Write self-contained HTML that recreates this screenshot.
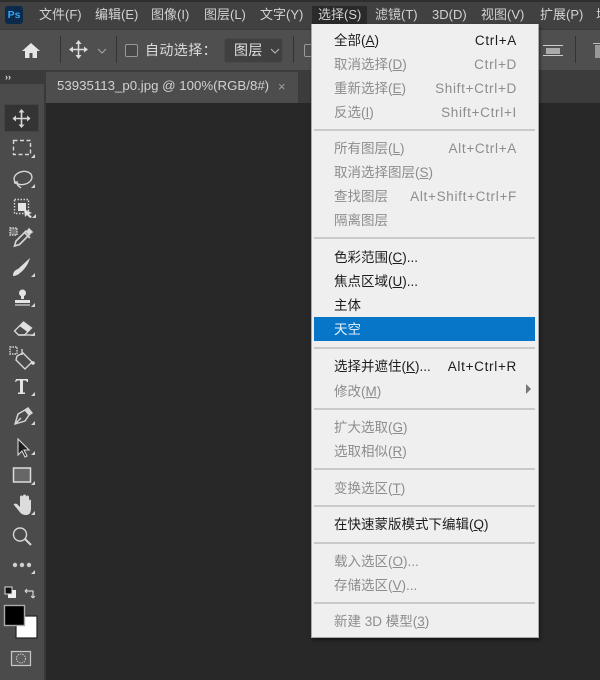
<!DOCTYPE html>
<html lang="zh"><head><meta charset="utf-8"><title>Photoshop 选择菜单</title>
<style>
html,body{margin:0;padding:0;background:#282828}
#r{position:relative;width:600px;height:680px;overflow:hidden;background:#282828;font-family:"Liberation Sans","Noto Sans CJK SC",sans-serif;font-size:13.5px;filter:blur(.35px)}
#r div,#r span.a,#r svg{position:absolute}
.m{top:6px;height:18px;line-height:18px;color:#d2d2d2;white-space:nowrap;font-size:13px}
.i{left:334px;height:24px;line-height:24px;white-space:nowrap;color:#8d8d8d;margin-top:1px}
.k{right:83px;height:24px;line-height:24px;white-space:nowrap;color:#8d8d8d;letter-spacing:.7px;margin-top:1px}
.b{color:#1c1c1c}
.s{left:314px;width:221px;height:2px;background:#c9c9c9}
u{text-underline-offset:1px}
</style></head><body><div id="r">
<div style="left:0;top:0;width:600px;height:29px;background:#414141"></div>
<div style="left:0;top:0;width:600px;height:2px;background:#2e2e2e"></div>
<div style="left:0;top:29px;width:600px;height:41px;background:#4f4f4f;border-top:1px solid #3a3a3a;box-sizing:border-box"></div>
<div style="left:0;top:70px;width:600px;height:33px;background:#3c3c3c"></div>
<div style="left:0;top:70px;width:44px;height:14px;background:#3a3a3a"></div>
<div style="left:46px;top:72px;width:252px;height:31px;background:#4d4d4d"></div>
<div style="left:0;top:84px;width:44px;height:596px;background:#4b4b4b"></div>
<div style="left:44px;top:84px;width:2px;height:596px;background:#383838"></div>
<div style="left:46px;top:103px;width:554px;height:577px;background:#282828"></div>

<div style="left:5px;top:6px;width:18px;height:18px;border-radius:3px;background:#0b2a4c"></div>
<div style="left:5px;top:6px;width:18px;height:18px;line-height:18px;text-align:center;color:#35a5f0;font-size:10.5px;font-weight:bold">Ps</div>

<div class="m" style="left:39px">文件(F)</div>
<div class="m" style="left:95px">编辑(E)</div>
<div class="m" style="left:151px">图像(I)</div>
<div class="m" style="left:204px">图层(L)</div>
<div class="m" style="left:260px">文字(Y)</div>
<div style="left:312px;top:6px;width:55px;height:18px;background:#2a2a2a"></div>
<div class="m" style="left:318px">选择(S)</div>
<div class="m" style="left:375px">滤镜(T)</div>
<div class="m" style="left:432px">3D(D)</div>
<div class="m" style="left:481px">视图(V)</div>
<div class="m" style="left:540px">扩展(P)</div>
<div class="m" style="left:596px">增</div>

<svg style="left:20px;top:40px" width="22" height="20" viewBox="0 0 22 20"><path d="M11 3 2 11h3v7h4.500v-5h3v5H17v-7h3z" fill="#e6e6e6"/></svg>
<div style="left:60px;top:36px;width:1px;height:27px;background:#333"></div>
<svg style="left:69px;top:40px" width="19" height="19" viewBox="0 0 19 19"><path d="M9.500 1v17M1 9.500h17" stroke="#ddd" stroke-width="1.500"/><path d="M9.500 0 6.500 4h6zM9.500 19l-3-4h6zM0 9.500l4-3v6zM19 9.500l-4-3v6z" fill="#ddd"/></svg>
<svg style="left:97px;top:47px" width="10" height="8" viewBox="0 0 10 8"><path d="M1 2l4 4 4-4" fill="none" stroke="#aaa"/></svg>
<div style="left:116px;top:36px;width:1px;height:27px;background:#333"></div>
<div style="left:125px;top:44px;width:11px;height:11px;border:1px solid #999;border-radius:2px;background:#474747"></div>
<div class="m" style="left:145px;top:41px;color:#dcdcdc;font-size:14px;letter-spacing:.4px">自动选择：</div>
<div style="left:224px;top:38px;width:59px;height:25px;background:#404040;border:1px solid #4a4a4a;border-radius:3px;box-sizing:border-box"></div>
<div class="m" style="left:234px;top:41px;color:#e0e0e0;font-size:14px;letter-spacing:.4px">图层</div>
<svg style="left:270px;top:47px" width="10" height="8" viewBox="0 0 10 8"><path d="M1 2l4 4 4-4" fill="none" stroke="#bbb"/></svg>
<div style="left:293px;top:36px;width:1px;height:27px;background:#333"></div>
<div style="left:304px;top:44px;width:11px;height:11px;border:1px solid #999;border-radius:2px"></div>
<div style="left:543px;top:45px;width:20px;height:1px;background:#ccc"></div>
<div style="left:546px;top:48px;width:14px;height:6px;background:#aaa"></div>
<div style="left:543px;top:55px;width:20px;height:1px;background:#ccc"></div>
<div style="left:575px;top:36px;width:1px;height:27px;background:#333"></div>
<div style="left:593px;top:43px;width:7px;height:1px;background:#bbb"></div>
<div style="left:595px;top:45px;width:5px;height:13px;background:#999"></div>

<div style="left:5px;top:72px;color:#ddd;font-size:9px;line-height:10px;font-weight:bold">››</div>
<div style="left:57px;top:76px;height:20px;line-height:20px;color:#d2d2d2;font-size:13.25px;white-space:nowrap">53935113_p0.jpg @ 100%(RGB/8#)</div>
<div style="left:278px;top:77px;height:20px;line-height:20px;color:#a0a0a0;font-size:13px">×</div>

<div style="left:4px;top:104px;width:35px;height:28px;background:#343434;border:1px solid #444;box-sizing:border-box"></div>
<svg style="left:0;top:100px" width="44" height="580" viewBox="0 100 44 580" fill="none" stroke="#d6d6d6" stroke-width="1.400">
<g fill="#d6d6d6" stroke="none"><path d="M35 158v-4l-4 4zM35 188v-4l-4 4zM36 218v-4l-4 4zM35 277v-4l-4 4zM35 307v-4l-4 4zM35 336v-4l-4 4zM35 396v-4l-4 4zM35 425v-4l-4 4zM35 455v-4l-4 4zM35 485v-4l-4 4zM35 515v-4l-4 4zM35 574v-4l-4 4z"/></g>
<path d="M21.500 110v17M13 118.500h17" stroke-width="1.600"/><path d="M21.500 109l-3 3.500h6zM21.500 128l-3-3.500h6zM12.500 118.500l3.500-3v6zM30.500 118.500l-3.500-3v6z" fill="#d6d6d6" stroke="none"/>
<rect x="13.500" y="140.500" width="17" height="14" stroke-dasharray="4 2.500"/>
<ellipse cx="23" cy="178" rx="9" ry="6.500" transform="rotate(-12 23 178)"/><path d="M15 181c-2 3 3 3 2 0M17 184c1 2 3 3 4 4"/>
<rect x="14.500" y="199.500" width="14" height="14" stroke-dasharray="1.500 1.500"/><rect x="18" y="203" width="8" height="8" fill="#e4e4e4" stroke="none"/><path d="M24 209l1 8 2-2 3 3 2-1-3-3 3-1z" fill="#e4e4e4" stroke="none"/>
<path d="M16 241l-1.500 5 5-1.500 10-10-3.500-3.500z" stroke-width="1.600"/><path d="M24 232l6 6M27 232l2-3 3 3-3 2z" fill="#e0e0e0" stroke-width="1.600"/><rect x="10" y="228" width="7" height="7" fill="#777" stroke-dasharray="1.500 1"/>
<path d="M13 276c0-4 2-6 5-7l12-11c-2 7-6 12-10 15-2 2-5 3-7 3z" fill="#e0e0e0" stroke="none"/>
<circle cx="22.500" cy="293" r="3.500" fill="#e4e4e4" stroke="none"/><path d="M21 296h3v3h-3zM15 300h15v3H15z" fill="#e4e4e4" stroke="none"/><path d="M15 305h15" stroke-width="1.200"/>
<path d="M14.500 331l9-9 8 6-7 7h-6z"/><path d="M23.500 322l8 6-4 4-8-6z" fill="#e0e0e0" stroke="none"/><path d="M19 335h14"/>
<path d="M17 356l6-3 9 9-7 7-9-9z"/><path d="M22 349v6"/><rect x="10" y="347" width="7" height="7" stroke-dasharray="1.500 1"/><circle cx="33" cy="363" r="1.800" fill="#e0e0e0" stroke="none"/>
<path d="M16 379h12v3h-1l-1-1.500h-3v12h2v1.500h-7v-1.500h2v-12h-3l-1 1.500h-1z" fill="#e4e4e4" stroke="none"/>
<path d="M15 424l3-10 7-4 4 5-4 6z"/><path d="M15 424l6-6"/><path d="M25 410l3-2 4 5-3 2" fill="#d6d6d6"/>
<path d="M18 439v16l4-4 3 6 2-1-3-6h5z" fill="#1d1d1d" stroke="#d6d6d6" stroke-width="1.100"/>
<rect x="13.500" y="468" width="17" height="14" fill="#676767" stroke="#dcdcdc" stroke-width="1.500"/>
<path transform="translate(0 3)" d="M14 502l5 6c2 3 4 4 7 4 4 0 5-3 5-7v-7c0-2-2-2-2 0v3-7c0-2-3-2-3 0v6-7c0-2-3-2-3 0v7-6c0-2-3-2-3 0v10l-3-3c-2-1-4 0-3 1z" fill="#dcdcdc" stroke="none"/>
<circle cx="20" cy="534.500" r="6.500"/><path d="M25 539l6 6" stroke-width="2"/>
<circle cx="15" cy="565" r="2.200" fill="#cfcfcf" stroke="none"/><circle cx="22" cy="565" r="2.200" fill="#cfcfcf" stroke="none"/><circle cx="29" cy="565" r="2.200" fill="#cfcfcf" stroke="none"/>
<rect x="8" y="590" width="8" height="8" fill="#eee" stroke="none"/><rect x="5" y="587" width="7" height="7" fill="#111" stroke="#ddd" stroke-width="1"/>
<path d="M25 591h8v7M25 591l2-2M25 591l2 2M33 598l-2-2M33 598l2-2" stroke-width="1.200"/>
<rect x="16" y="616" width="21" height="22" fill="#fff" stroke="#222" stroke-width="1.200"/>
<rect x="4.500" y="605.500" width="20" height="20" fill="#000" stroke="#aaa" stroke-width="1.400"/>
<rect x="11.500" y="651.500" width="19" height="14" fill="#5d5d5d" stroke="#c8c8c8" stroke-width="1.200"/><circle cx="21" cy="658.500" r="4.500" stroke="#c8c8c8" stroke-width="1" stroke-dasharray="1.500 1"/>
</svg>

<div style="left:311px;top:24px;width:228px;height:614px;background:#efefef;border:1px solid #a8a8a8;border-top:0;box-sizing:border-box;box-shadow:1px 2px 3px rgba(0,0,0,.5)"></div>
<div style="left:314px;top:317px;width:221px;height:24px;background:#0776c9"></div>

<div class="i b" style="top:28px">全部(<u>A</u>)</div><div class="k b" style="top:28px">Ctrl+A</div>
<div class="i" style="top:52px">取消选择(<u>D</u>)</div><div class="k" style="top:52px">Ctrl+D</div>
<div class="i" style="top:76px">重新选择(<u>E</u>)</div><div class="k" style="top:76px">Shift+Ctrl+D</div>
<div class="i" style="top:100px">反选(<u>I</u>)</div><div class="k" style="top:100px">Shift+Ctrl+I</div>
<div class="s" style="top:129px"></div>
<div class="i" style="top:136px">所有图层(<u>L</u>)</div><div class="k" style="top:136px">Alt+Ctrl+A</div>
<div class="i" style="top:160px">取消选择图层(<u>S</u>)</div>
<div class="i" style="top:184px">查找图层</div><div class="k" style="top:184px">Alt+Shift+Ctrl+F</div>
<div class="i" style="top:208px">隔离图层</div>
<div class="s" style="top:237px"></div>
<div class="i b" style="top:245px">色彩范围(<u>C</u>)...</div>
<div class="i b" style="top:269px">焦点区域(<u>U</u>)...</div>
<div class="i b" style="top:293px">主体</div>
<div class="i" style="top:317px;color:#e8f3fb">天空</div>
<div class="s" style="top:347px"></div>
<div class="i b" style="top:354px">选择并遮住(<u>K</u>)...</div><div class="k b" style="top:354px">Alt+Ctrl+R</div>
<div class="i" style="top:379px">修改(<u>M</u>)</div>
<svg style="left:525px;top:383px" width="7" height="12" viewBox="0 0 7 12"><path d="M1 1l5 5-5 5z" fill="#777"/></svg>
<div class="s" style="top:408px"></div>
<div class="i" style="top:415px">扩大选取(<u>G</u>)</div>
<div class="i" style="top:439px">选取相似(<u>R</u>)</div>
<div class="s" style="top:468px"></div>
<div class="i" style="top:476px">变换选区(<u>T</u>)</div>
<div class="s" style="top:505px"></div>
<div class="i b" style="top:512px">在快速蒙版模式下编辑(<u>Q</u>)</div>
<div class="s" style="top:542px"></div>
<div class="i" style="top:549px">载入选区(<u>O</u>)...</div>
<div class="i" style="top:573px">存储选区(<u>V</u>)...</div>
<div class="s" style="top:602px"></div>
<div class="i" style="top:609px">新建 3D 模型(<u>3</u>)</div>
</div></body></html>
